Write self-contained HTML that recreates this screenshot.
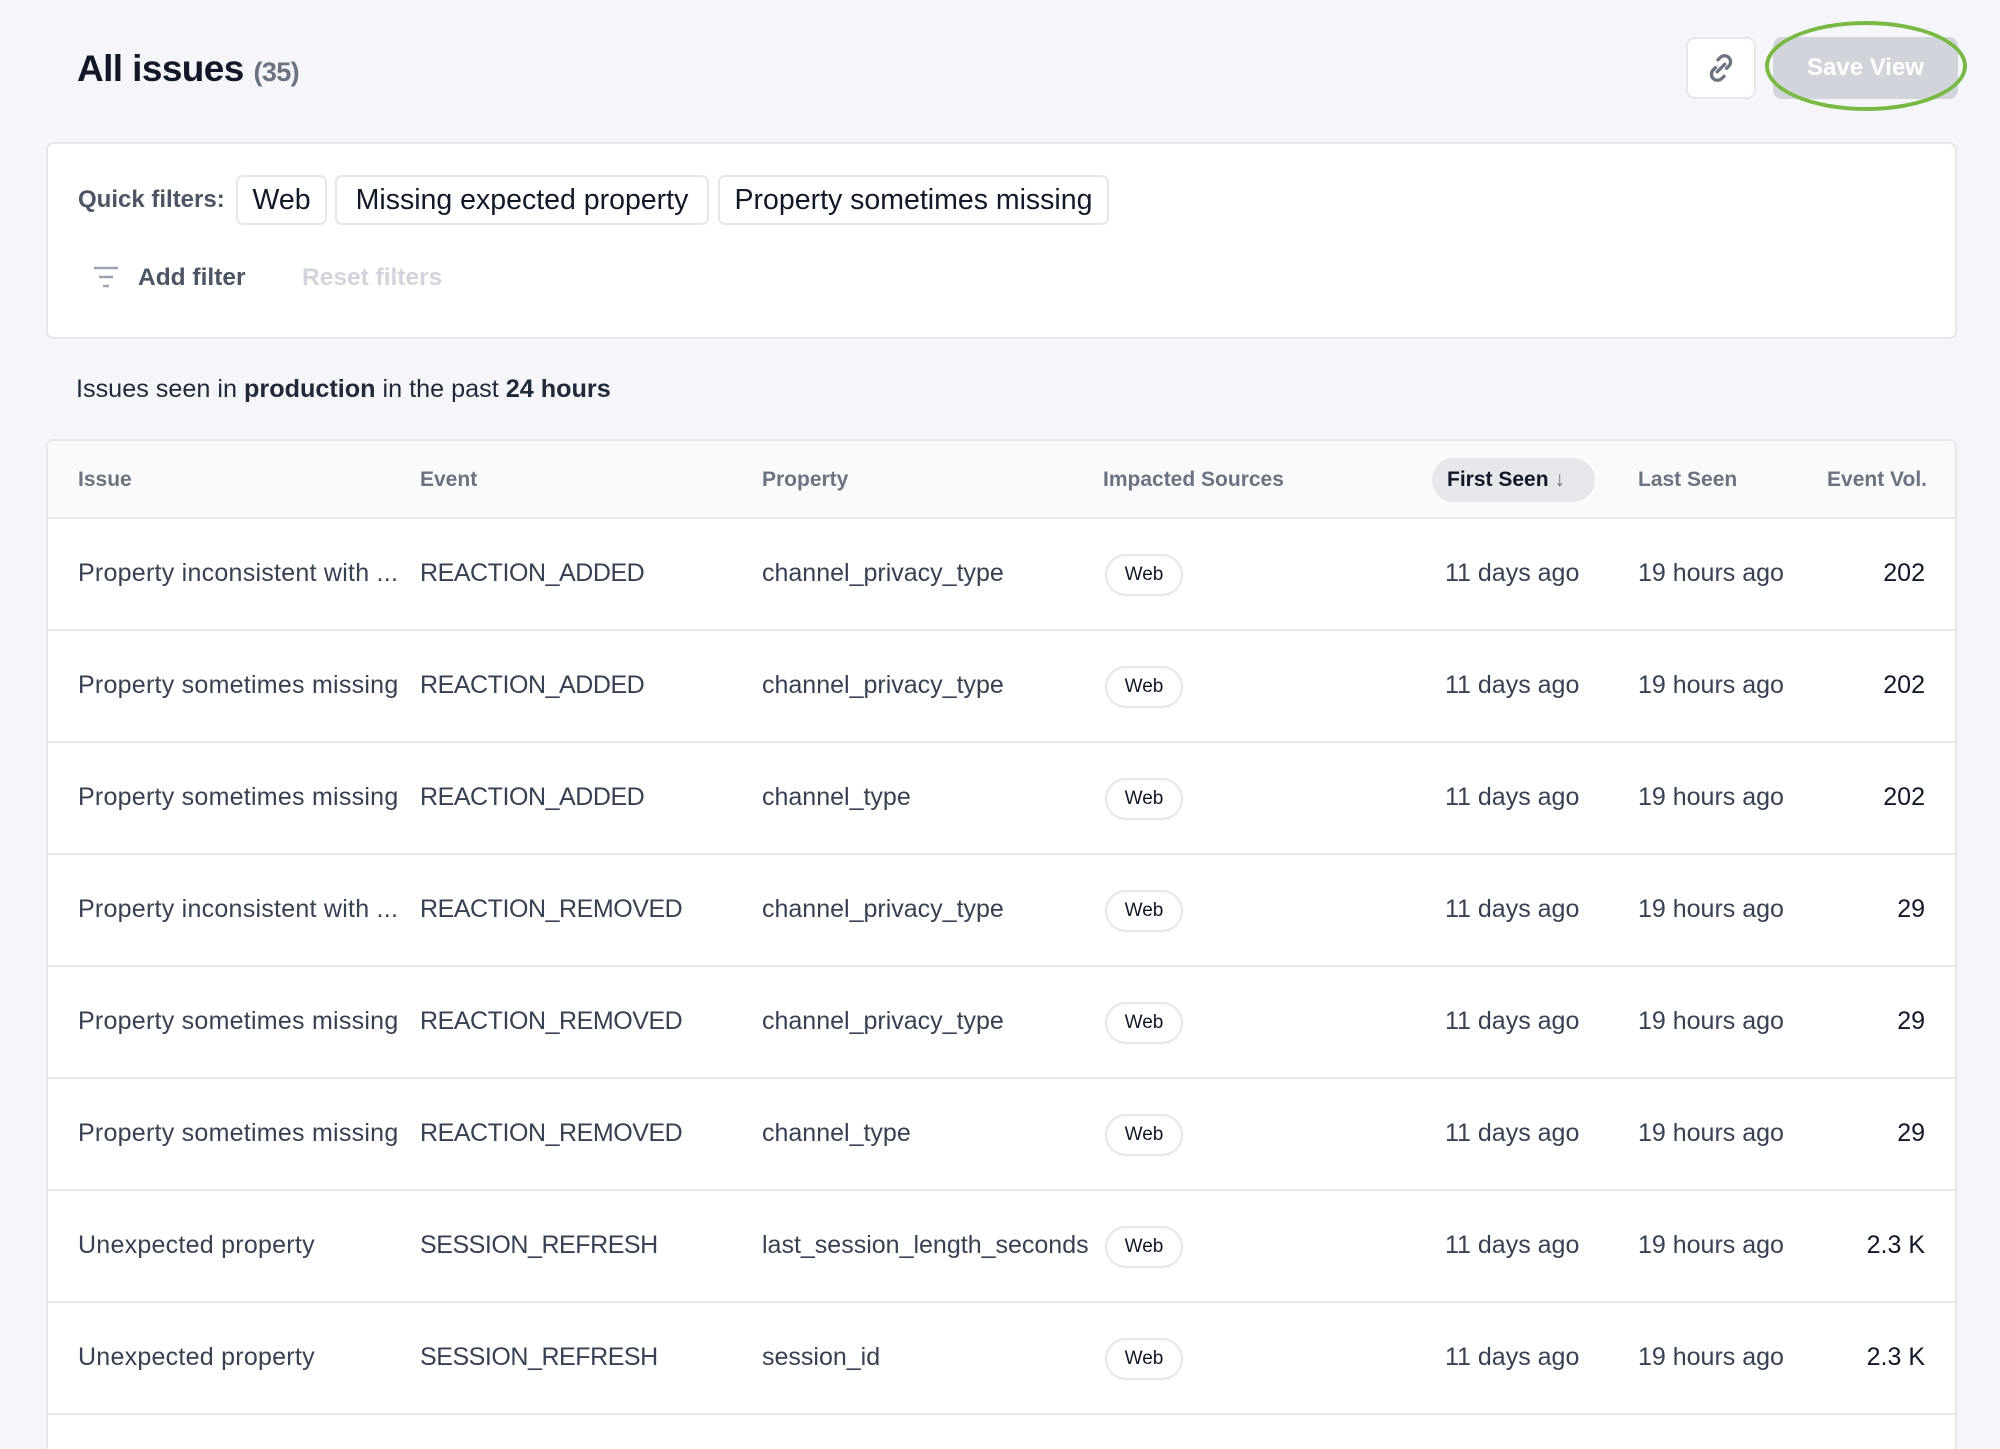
<!DOCTYPE html>
<html><head><meta charset="utf-8"><style>
*{box-sizing:border-box;margin:0;padding:0}
body{width:2000px;height:1444px;overflow:hidden;background:#f5f6fa;font-family:"Liberation Sans",sans-serif;color:#1f2937;position:relative}
.abs{position:absolute}
h1{position:absolute;left:77px;top:48px;font-size:37px;font-weight:bold;color:#111827;letter-spacing:-0.6px}
h1 span{font-size:27px;color:#6b7280;font-weight:bold}
.linkbtn{left:1686px;top:37px;width:70px;height:62px;background:#fff;border:2px solid #e5e7eb;border-radius:9px;display:flex;align-items:center;justify-content:center}
.save{left:1773px;top:37px;width:185px;height:62px;background:#d1d5db;border-radius:9px;color:#fff;font-weight:bold;font-size:24px;display:flex;align-items:center;justify-content:center}
.ellipse{left:1765px;top:21px;width:202px;height:90px;border:4px solid #78b843;border-radius:50%}
.card{left:46px;top:142px;width:1911px;height:197px;background:#fff;border:2px solid #e5e7eb;border-radius:8px}
.qf{left:78px;top:186px;font-size:24px;font-weight:bold;color:#4b5563}
.chip{top:175px;height:50px;border:2px solid #e5e7eb;border-radius:7px;background:#fff;font-size:28.5px;color:#111827;display:flex;align-items:center;justify-content:center}
.add{left:138px;top:264px;font-size:24.5px;font-weight:bold;color:#4b5563}
.reset{left:302px;top:264px;font-size:24.5px;font-weight:bold;color:#d1d5db}
.info{left:76px;top:375px;font-size:25.2px;color:#1f2937}
.table{left:46px;top:439px;width:1911px;height:1010px;background:#fff;border:2px solid #e5e7eb;border-bottom:none;border-radius:8px 8px 0 0;overflow:hidden}
.thead{height:78px;background:#f9fafb;border-bottom:2px solid #e5e7eb;position:relative;font-size:21px;color:#6b7280;font-weight:bold}
.thead div{position:absolute;top:27px}
.pill{left:1384px;top:17px!important;width:163px;height:44px;border-radius:22px;background:#e5e7eb;color:#111827;padding:10px 0 0 15px}
.row{height:112px;border-bottom:2px solid #e5e7eb;position:relative;font-size:25px;color:#374151}
.row div{position:absolute;top:40px}
.row .c1{left:30px;letter-spacing:0.25px}
.row .c2{left:372px;letter-spacing:-0.45px}
.row .c3{left:714px}
.row .c5{left:1397px}
.row .c6{left:1590px}
.row .vol{right:30px;left:auto;color:#111827}
.row .badge{left:1057px;top:35px;width:78px;height:42px;border:2px solid #e5e7eb;border-radius:21px;font-size:19px;color:#111827;display:flex;align-items:center;justify-content:center}
</style></head><body>
<h1>All issues <span>(35)</span></h1>
<div class="abs linkbtn"><svg width="36" height="36" viewBox="0 0 24 24" fill="none" stroke="#6b7280" stroke-width="2.2" stroke-linecap="round"><path d="M10 6.5l1.5-1.5a4 4 0 0 1 5.7 5.7L15.7 12.2"/><path d="M14 17.5l-1.5 1.5a4 4 0 0 1-5.7-5.7L8.3 11.8"/><path d="M9.5 14.5l5-5"/></svg></div>
<div class="abs save">Save View</div>
<div class="abs ellipse"></div>
<div class="abs card"></div>
<div class="abs qf">Quick filters:</div>
<div class="abs chip" style="left:236px;width:91px">Web</div>
<div class="abs chip" style="left:335px;width:374px">Missing expected property</div>
<div class="abs chip" style="left:718px;width:391px">Property sometimes missing</div>
<svg class="abs" style="left:92px;top:265px" width="28" height="24" viewBox="0 0 28 24"><g stroke="#9ca3af" stroke-width="2.4"><path d="M2 3h24M7 12h14M11 21h6"/></g></svg>
<div class="abs add">Add filter</div>
<div class="abs reset">Reset filters</div>
<div class="abs info">Issues seen in <b>production</b> in the past <b>24 hours</b></div>
<div class="abs table">
<div class="thead">
<div style="left:30px">Issue</div><div style="left:372px">Event</div><div style="left:714px">Property</div><div style="left:1055px">Impacted Sources</div>
<div class="pill">First Seen <span style="font-weight:normal;color:#6b7280">↓</span></div>
<div style="left:1590px">Last Seen</div><div style="right:28px">Event Vol.</div>
</div>
<div class="row"><div class="c1">Property inconsistent with ...</div><div class="c2">REACTION_ADDED</div><div class="c3">channel_privacy_type</div><div class="badge">Web</div><div class="c5">11 days ago</div><div class="c6">19 hours ago</div><div class="vol">202</div></div>
<div class="row"><div class="c1">Property sometimes missing</div><div class="c2">REACTION_ADDED</div><div class="c3">channel_privacy_type</div><div class="badge">Web</div><div class="c5">11 days ago</div><div class="c6">19 hours ago</div><div class="vol">202</div></div>
<div class="row"><div class="c1">Property sometimes missing</div><div class="c2">REACTION_ADDED</div><div class="c3">channel_type</div><div class="badge">Web</div><div class="c5">11 days ago</div><div class="c6">19 hours ago</div><div class="vol">202</div></div>
<div class="row"><div class="c1">Property inconsistent with ...</div><div class="c2">REACTION_REMOVED</div><div class="c3">channel_privacy_type</div><div class="badge">Web</div><div class="c5">11 days ago</div><div class="c6">19 hours ago</div><div class="vol">29</div></div>
<div class="row"><div class="c1">Property sometimes missing</div><div class="c2">REACTION_REMOVED</div><div class="c3">channel_privacy_type</div><div class="badge">Web</div><div class="c5">11 days ago</div><div class="c6">19 hours ago</div><div class="vol">29</div></div>
<div class="row"><div class="c1">Property sometimes missing</div><div class="c2">REACTION_REMOVED</div><div class="c3">channel_type</div><div class="badge">Web</div><div class="c5">11 days ago</div><div class="c6">19 hours ago</div><div class="vol">29</div></div>
<div class="row"><div class="c1">Unexpected property</div><div class="c2">SESSION_REFRESH</div><div class="c3">last_session_length_seconds</div><div class="badge">Web</div><div class="c5">11 days ago</div><div class="c6">19 hours ago</div><div class="vol">2.3 K</div></div>
<div class="row"><div class="c1">Unexpected property</div><div class="c2">SESSION_REFRESH</div><div class="c3">session_id</div><div class="badge">Web</div><div class="c5">11 days ago</div><div class="c6">19 hours ago</div><div class="vol">2.3 K</div></div>
</div>
</body></html>
